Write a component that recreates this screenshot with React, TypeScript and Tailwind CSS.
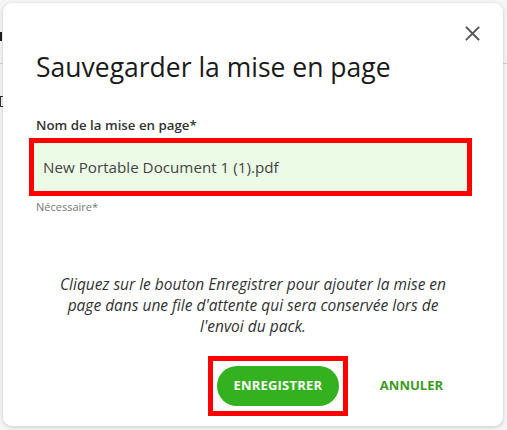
import React from 'react';

const font = { fontFamily: '"Open Sans", "Noto Sans", sans-serif' };

const CloseIcon = () => (
    <svg width="15" height="15" viewBox="0 0 15 15" fill="none">
        <path d="M1.5 1.5 L13.5 13.5 M13.5 1.5 L1.5 13.5" stroke="#555" strokeWidth="1.8" strokeLinecap="square" />
    </svg>
);

export default function App() {
    return (
        <div className="relative w-[507px] h-[430px] overflow-hidden bg-[#f4f4f4]" style={font}>
            {/* page behind the modal, only its left edge shows */}
            <div className="absolute inset-0 bg-white">
                <div className="mt-[32px] w-[2px] h-[9px] bg-[#222]" />
                <div className="mt-[22px] h-px bg-[#dcdcdc]" />
                <div className="mt-[32px] w-[3px] h-[11px] border-l-[1.5px] border-y border-[#333]" />
            </div>
            <div className="absolute inset-0 bg-black/[0.04]" />

            {/* modal */}
            <div className="absolute left-[3px] top-[3px] w-[500px] h-[423px] rounded-[9px] bg-white shadow-[0_1px_4px_rgba(0,0,0,0.18)] flex flex-col px-[33px]">
                <button type="button" className="absolute top-[23px] right-[23px] p-0">
                    <CloseIcon />
                </button>

                <h2 className="mt-[46px] text-[26.5px] leading-[36px] text-[#1a1a1a] font-normal">Sauvegarder la mise en page</h2>

                <label className="mt-[30px] text-[13.3px] leading-[20px] font-semibold text-[#333]">Nom de la mise en page*</label>

                <div className="mt-[3px] ml-[-7px] w-[443px] h-[58px] border-[5px] border-[#ff0000] bg-white">
                    <div className="h-full bg-[#ecfbe5] flex items-center pl-[9px] text-[15.2px] text-[#444]">
                        New Portable Document 1 (1).pdf
                    </div>
                </div>

                <div className="mt-[3px] text-[11px] leading-[16px] text-[#777]">Nécessaire*</div>

                <p className="mt-[59px] mx-[20px] text-center italic text-[15.5px] leading-[21px] text-[#333]">
                    Cliquez sur le bouton Enregistrer pour ajouter la mise en page dans une file d'attente qui sera conservée lors de l'envoi du pack.
                </p>

                <div className="mt-[19px] flex items-center justify-end gap-[16px] mr-[11px]">
                    <div className="border-[5px] border-[#ff0000] px-[4px] py-[5px]">
                        <button type="button" className="h-[40px] w-[122px] rounded-full bg-[#33b11e] text-white text-[13px] font-bold tracking-[0.2px]">
                            ENREGISTRER
                        </button>
                    </div>
                    <button type="button" className="h-[40px] px-[16px] text-[13px] font-bold text-[#3a9b20]">
                        ANNULER
                    </button>
                </div>
            </div>
        </div>
    );
}
